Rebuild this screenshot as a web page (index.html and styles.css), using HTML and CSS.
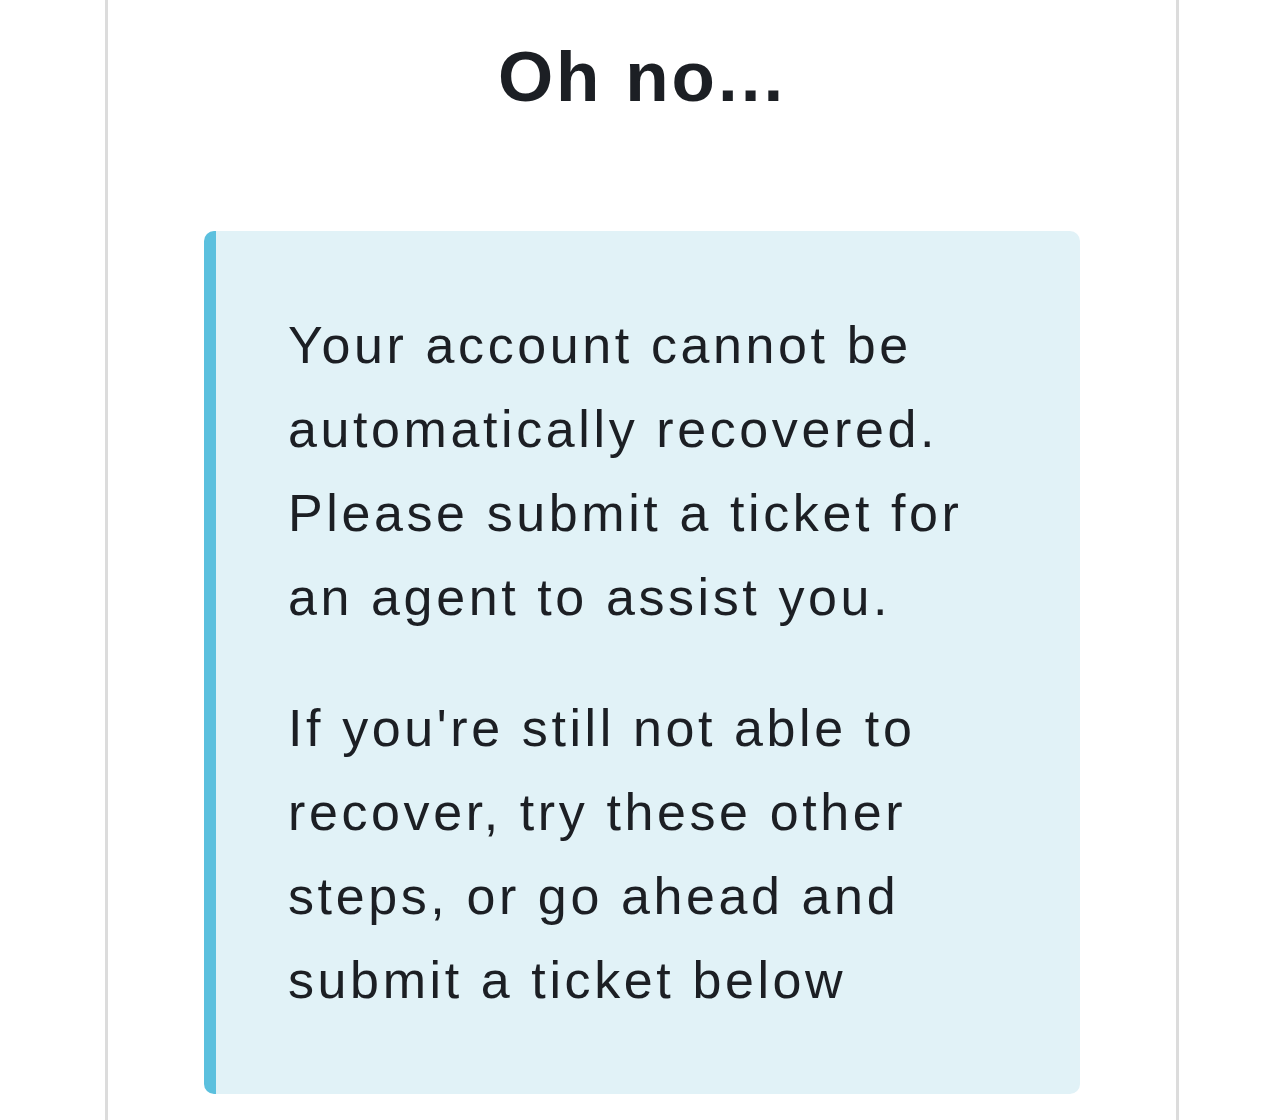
FILE: index.html
```html
<!DOCTYPE html>
<html lang="en">
<head>
  <meta charset="UTF-8" />
  <title>Account Recovery</title>
  <meta name="viewport" content="width=device-width, initial-scale=1.0" />
  <link rel="stylesheet" href="styles.css">
</head>
<body>
  <div class="card">
    <h1>Oh no...</h1>

    <div class="alert-info">
      <p>Your account cannot be automatically recovered. Please submit a ticket for an agent to assist you.</p>
      <p>If you're still not able to recover, try these other steps, or go ahead and submit a ticket below</p>
    </div>
  </div>
</body>
</html>
```

FILE: styles.css
```css
:root {
  --text-color: #1c1f24;
  --info-bg: #e1f2f7;
  --info-border: #5bc0de;
  --card-border: #dcdcdc;
}

body {
  font-family: 'Liberation Sans', Arial, sans-serif;
  background-color: white;
  color: var(--text-color);
  margin: 0;
}

.card {
  max-width: 876px;
  margin: 0 auto;
  padding: 1px 96px 0;
  min-height: 1120px;
  border-left: 3px solid var(--card-border);
  border-right: 3px solid var(--card-border);
}

h1 {
  font-size: 71px;
  font-weight: bold;
  letter-spacing: 3px;
  text-align: center;
  line-height: 1.2;
  margin: 33px 0 0;
}

.alert-info {
  margin-top: 112px;
  padding: 72px;
  background-color: var(--info-bg);
  border-left: 12px solid var(--info-border);
  border-radius: 10px;
}

.alert-info p {
  font-size: 52px;
  line-height: 84px;
  letter-spacing: 3.6px;
  margin: 0 0 47px;
}

.alert-info p:last-child {
  margin-bottom: 0;
}
```
